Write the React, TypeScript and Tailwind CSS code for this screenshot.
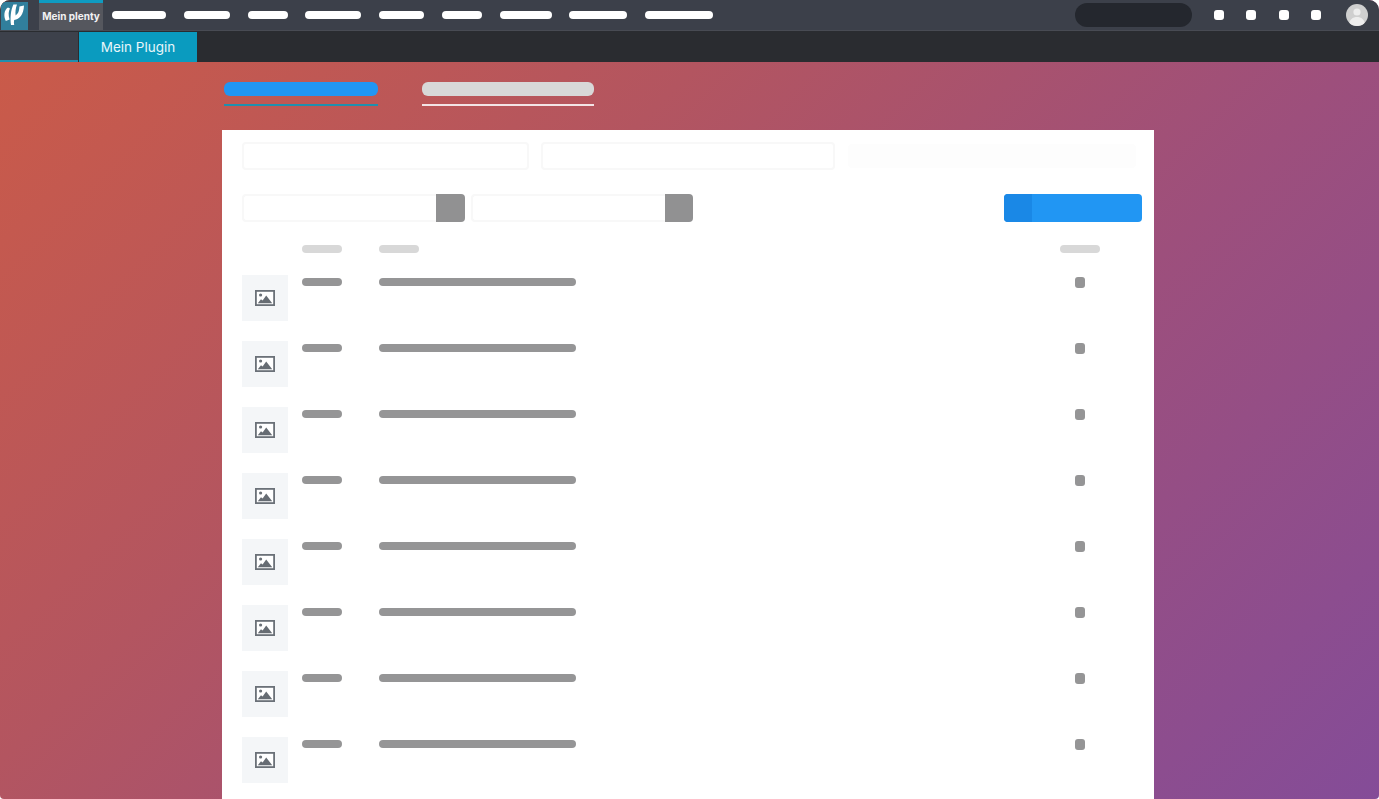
const navPills = ["w-[54px]", "w-[46px]", "w-[40px]", "w-[56px]", "w-[45px]", "w-[40px]", "w-[52px]", "w-[58px]", "w-[68px]"];

function ImageIcon() {
  return (
    <svg width="20" height="16" viewBox="0 0 20 16">
      <rect x="0.9" y="0.9" width="18.2" height="14.2" fill="#fff" stroke="#6b7178" strokeWidth="1.8" />
      <circle cx="5.6" cy="5" r="1.6" fill="#6b7178" />
      <path d="M2.8 13.2 L6 9.2 L7.6 10.4 L11.2 5.4 L17.2 13.2 Z" fill="#666c73" />
    </svg>
  );
}

function Row() {
  return (
    <div className="flex h-[66px]">
      <div className="w-[46px] h-[46px] bg-[#f4f6f8] flex items-center justify-center">
        <ImageIcon />
      </div>
      <div className="ml-[14px] mt-[3px] w-[40px] h-2 rounded-full bg-[#959596]" />
      <div className="ml-[37px] mt-[3px] w-[197px] h-2 rounded-full bg-[#959596]" />
      <div className="ml-[499px] mt-[2px] w-[10px] h-[11px] rounded-[3px] bg-[#959596]" />
    </div>
  );
}

export default function App() {
  return (
    <div className="h-[799px] w-[1379px] overflow-hidden bg-white font-['Inter',sans-serif]">
      <div className="flex flex-col h-full rounded-t-[10px] rounded-b-[4px] overflow-hidden bg-[linear-gradient(135deg,#cc5b47_0%,#b35560_35%,#9d4f7c_65%,#844c98_100%)]">
        <header className="h-[31px] shrink-0 flex items-center bg-[#3c404a] border-b border-[#484b53]">
          <div className="ml-[1px] w-[27px] h-[28px] mt-[1px] bg-[#317f9c] rounded-tl-[4px]">
            <svg width="27" height="28" viewBox="1 1 27 28">
              <path d="M8 6.5 C4 9 3.4 15 5.8 20 L9.6 18.4 C8.2 14 8.4 10 10 7.4 Z" fill="#fff" />
              <path d="M13.4 3.5 C10.8 9 10 17 11 24 L14.2 24 C13.8 22 13.9 20.4 14.2 19 C19.4 18.4 23.6 13.5 24 4.5 L19.4 5.6 C19.4 10 17.8 13.4 15.6 14.4 C15.2 11 15.6 7 17 3.5 Z" fill="#fff" />
            </svg>
          </div>
          <div className="ml-[11px] w-[64px] h-[30px] bg-[#55575e] border-t-[3px] border-[#0f9cc1] flex items-center justify-center text-[10px] font-bold text-[#f2f2f3] whitespace-nowrap">
            Mein plenty
          </div>
          <nav className="ml-[9px] flex gap-[17.75px]">
            {navPills.map((w) => (
              <div key={w} className={`${w} h-2 rounded-full bg-white`} />
            ))}
          </nav>
          <div className="ml-auto w-[117px] h-6 rounded-full bg-[#24272e]" />
          <div className="ml-[22px] flex gap-[22.3px]">
            <div className="w-[10px] h-[10px] rounded-[3px] bg-white" />
            <div className="w-[10px] h-[10px] rounded-[3px] bg-white" />
            <div className="w-[10px] h-[10px] rounded-[3px] bg-white" />
            <div className="w-[10px] h-[10px] rounded-[3px] bg-white" />
          </div>
          <div className="ml-[25px] mr-[11px] w-[22px] h-[22px] rounded-full bg-[#cfcfcf] overflow-hidden flex flex-col items-center">
            <svg width="22" height="22" viewBox="0 0 22 22">
              <circle cx="11" cy="8" r="3.6" fill="#ededed" />
              <path d="M3 22 C3 15 7 13 11 13 C15 13 19 15 19 22 Z" fill="#ededed" />
            </svg>
          </div>
        </header>

        <div className="h-[31px] shrink-0 flex bg-[#2a2c30]">
          <div className="mt-[1px] w-[78px] bg-[#3d414b] border-b-2 border-[#1f8fae]" />
          <div className="mt-[1px] ml-[1px] w-[118px] bg-[#0a9bbf] flex items-center justify-center text-[13.5px] text-[#e8f6fa]">
            Mein Plugin
          </div>
        </div>

        <main className="flex-1 flex flex-col pl-[222px] pr-[225px]">
          <div className="h-[68px] shrink-0 flex pt-5 pl-[2px] gap-[44px]">
            <div className="w-[154px] h-[24px] border-b-2 border-[#1f8fae]">
              <div className="h-[14px] rounded-[6px] bg-[#2196f3]" />
            </div>
            <div className="w-[172px] h-[24px] border-b-2 border-[#f3e4e6]">
              <div className="h-[14px] rounded-[6px] bg-[#d8d8d8]" />
            </div>
          </div>

          <section className="flex-1 bg-white pl-5 pr-3 pt-3">
            <div className="flex h-[28px]">
              <div className="w-[287px] rounded-[4px] border-2 border-[#f8f8f8]" />
              <div className="ml-3 w-[294px] rounded-[4px] border-2 border-[#f8f8f8]" />
              <div className="ml-[13px] mt-[2px] w-[288px] h-[24px] rounded-[4px] bg-[#fdfdfd]" />
            </div>

            <div className="flex mt-6 h-[28px]">
              <div className="w-[194px] rounded-l-[4px] border-2 border-r-0 border-[#f8f8f8]" />
              <div className="w-[29px] rounded-r-[4px] bg-[#919192]" />
              <div className="ml-[6px] w-[194px] rounded-l-[4px] border-2 border-r-0 border-[#f8f8f8]" />
              <div className="w-[28px] rounded-r-[4px] bg-[#919192]" />
              <div className="ml-auto w-[138px] rounded-[4px] bg-[#2196f3] overflow-hidden">
                <div className="w-[28px] h-full bg-[#1a88e6]" />
              </div>
            </div>

            <div className="flex mt-[23px] h-[30px]">
              <div className="ml-[60px] w-[40px] h-2 rounded-full bg-[#d8d8d8]" />
              <div className="ml-[37px] w-[40px] h-2 rounded-full bg-[#d8d8d8]" />
              <div className="ml-[641px] w-[40px] h-2 rounded-full bg-[#d8d8d8]" />
            </div>

            <div className="flex flex-col">
              {[0, 1, 2, 3, 4, 5, 6, 7].map((i) => (
                <Row key={i} />
              ))}
            </div>
          </section>
        </main>
      </div>
    </div>
  );
}
